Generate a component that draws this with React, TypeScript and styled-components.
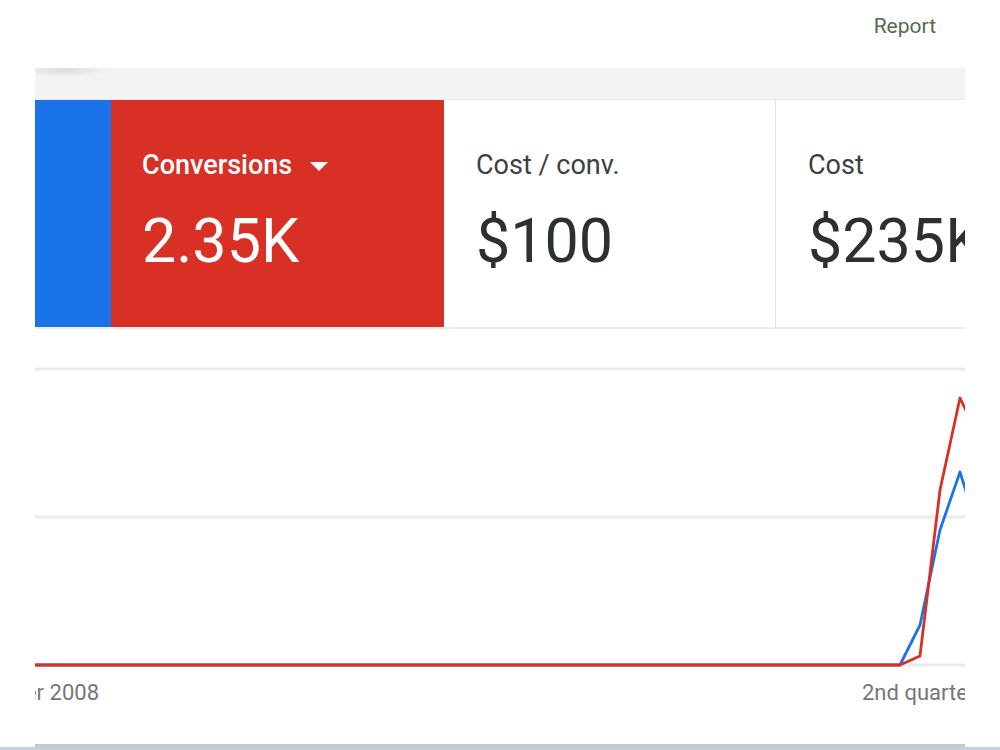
import React from 'react';
import styled, { createGlobalStyle } from 'styled-components';

const GlobalStyle = createGlobalStyle`
  html, body {
    margin: 0;
    padding: 0;
    background: #fff;
    font-family: Roboto, "Liberation Sans", Arial, sans-serif;
  }
`;

// Dummy data, as captured on screen
const scorecards = [
  { id: 'clicks', label: 'Clicks', value: '', tone: 'blue' as const, width: 76 },
  { id: 'conv', label: 'Conversions', value: '2.35K', tone: 'red' as const, width: 333, menu: true },
  { id: 'cpa', label: 'Cost / conv.', value: '$100', tone: 'white' as const, width: 332, divider: true },
  { id: 'cost', label: 'Cost', value: '$235K', tone: 'white' as const },
];

const conversions = [
  [0, 336], [865, 336], [885, 327], [905, 161], [925, 69], [934, 88],
];
const clicks = [
  [0, 336], [865, 336], [885, 296], [905, 201], [925, 143], [934, 172],
];

const toPoints = (pts: number[][]) => pts.map(([x, y]) => `${x},${y}`).join(' ');

const App: React.FC = () => {
  return (
    <>
      <GlobalStyle />
      <Page>
        <Header>
          <ReportLink>Report</ReportLink>
        </Header>
        <Panel>
          <Strip />
          <CardRow>
            {scorecards.map((card) => (
              <Card key={card.id} tone={card.tone} fixed={card.width} divider={card.divider}>
                {card.tone !== 'blue' && (
                  <>
                    <CardLabel tone={card.tone}>
                      {card.label}
                      {card.menu && <Caret />}
                    </CardLabel>
                    <CardValue tone={card.tone}>{card.value}</CardValue>
                  </>
                )}
              </Card>
            ))}
          </CardRow>
          <Chart>
            <svg width="930" height="415" viewBox="0 0 930 415">
              <line x1="0" y1="40" x2="930" y2="40" stroke="#ebebeb" strokeWidth="3" />
              <line x1="0" y1="188" x2="930" y2="188" stroke="#ebebeb" strokeWidth="3" />
              <line x1="0" y1="336" x2="930" y2="336" stroke="#ebebeb" strokeWidth="3" />
              <polyline
                points={toPoints(clicks)}
                fill="none"
                stroke="#1a73e8"
                strokeWidth="2.8"
                strokeLinejoin="round"
              />
              <polyline
                points={toPoints(conversions)}
                fill="none"
                stroke="#d93025"
                strokeWidth="2.8"
                strokeLinejoin="round"
              />
              <AxisText x="64" y="371" textAnchor="end">1st quarter 2008</AxisText>
              <AxisText x="827" y="371">2nd quarter 2008</AxisText>
            </svg>
          </Chart>
          <BottomBar />
        </Panel>
        <PageEdge />
      </Page>
    </>
  );
};

export default App;

const Page = styled.div`
  width: 1000px;
  height: 750px;
  overflow: hidden;
  display: flex;
  flex-direction: column;
`;

const Header = styled.div`
  height: 68px;
  box-sizing: border-box;
  padding: 14px 64px 0 0;
  display: flex;
  justify-content: flex-end;
  align-items: flex-start;
`;

const ReportLink = styled.span`
  font-size: 21px;
  line-height: 24px;
  color: #586a4e;
`;

const Panel = styled.div`
  margin: 0 35px;
  width: 930px;
  overflow: hidden;
  display: flex;
  flex-direction: column;
`;

const Strip = styled.div`
  height: 32px;
  background:
    radial-gradient(ellipse 45px 7px at 30px 2px, rgba(200, 203, 206, 0.6), rgba(241, 243, 244, 0) 100%),
    #f1f3f4;
  border-bottom: 1px solid #e6e8ea;
  box-sizing: border-box;
`;

type Tone = 'blue' | 'red' | 'white';

const toneBg: Record<Tone, string> = {
  blue: '#1a73e8',
  red: '#d93025',
  white: '#ffffff',
};

const CardRow = styled.div`
  display: flex;
  height: 229px;
  box-sizing: border-box;
  border-bottom: 2px solid #ececec;
`;

const Card = styled.div<{ tone: Tone; fixed?: number; divider?: boolean }>`
  flex: ${({ fixed }) => (fixed ? `0 0 ${fixed}px` : '1 1 auto')};
  min-width: 0;
  box-sizing: border-box;
  background: ${({ tone }) => toneBg[tone]};
  padding: 49px 0 0 ${({ tone }) => (tone === 'red' ? 31 : 32)}px;
  border-right: ${({ divider }) => (divider ? '1px solid #e3e3e3' : 'none')};
  white-space: nowrap;
  overflow: hidden;
`;

const CardLabel = styled.div<{ tone: Tone }>`
  display: flex;
  align-items: center;
  font-size: 27px;
  line-height: 32px;
  font-weight: ${({ tone }) => (tone === 'white' ? 400 : 500)};
  color: ${({ tone }) => (tone === 'white' ? '#3c4043' : '#ffffff')};
`;

const Caret = styled.span`
  display: inline-block;
  margin-left: 18px;
  margin-top: 2px;
  width: 0;
  height: 0;
  border-left: 9px solid transparent;
  border-right: 9px solid transparent;
  border-top: 9px solid #ffffff;
`;

const CardValue = styled.div<{ tone: Tone }>`
  margin-top: 24px;
  font-size: 61px;
  line-height: 72px;
  color: ${({ tone }) => (tone === 'white' ? '#2d3033' : '#ffffff')};
`;

const Chart = styled.div`
  height: 415px;
  svg {
    display: block;
  }
`;

const AxisText = styled.text`
  font-family: Roboto, "Liberation Sans", Arial, sans-serif;
  font-size: 22px;
  fill: #767676;
`;

const BottomBar = styled.div`
  height: 3px;
  background: #c5c8c8;
`;

const PageEdge = styled.div`
  height: 3px;
  background: #c6cee0;
`;
